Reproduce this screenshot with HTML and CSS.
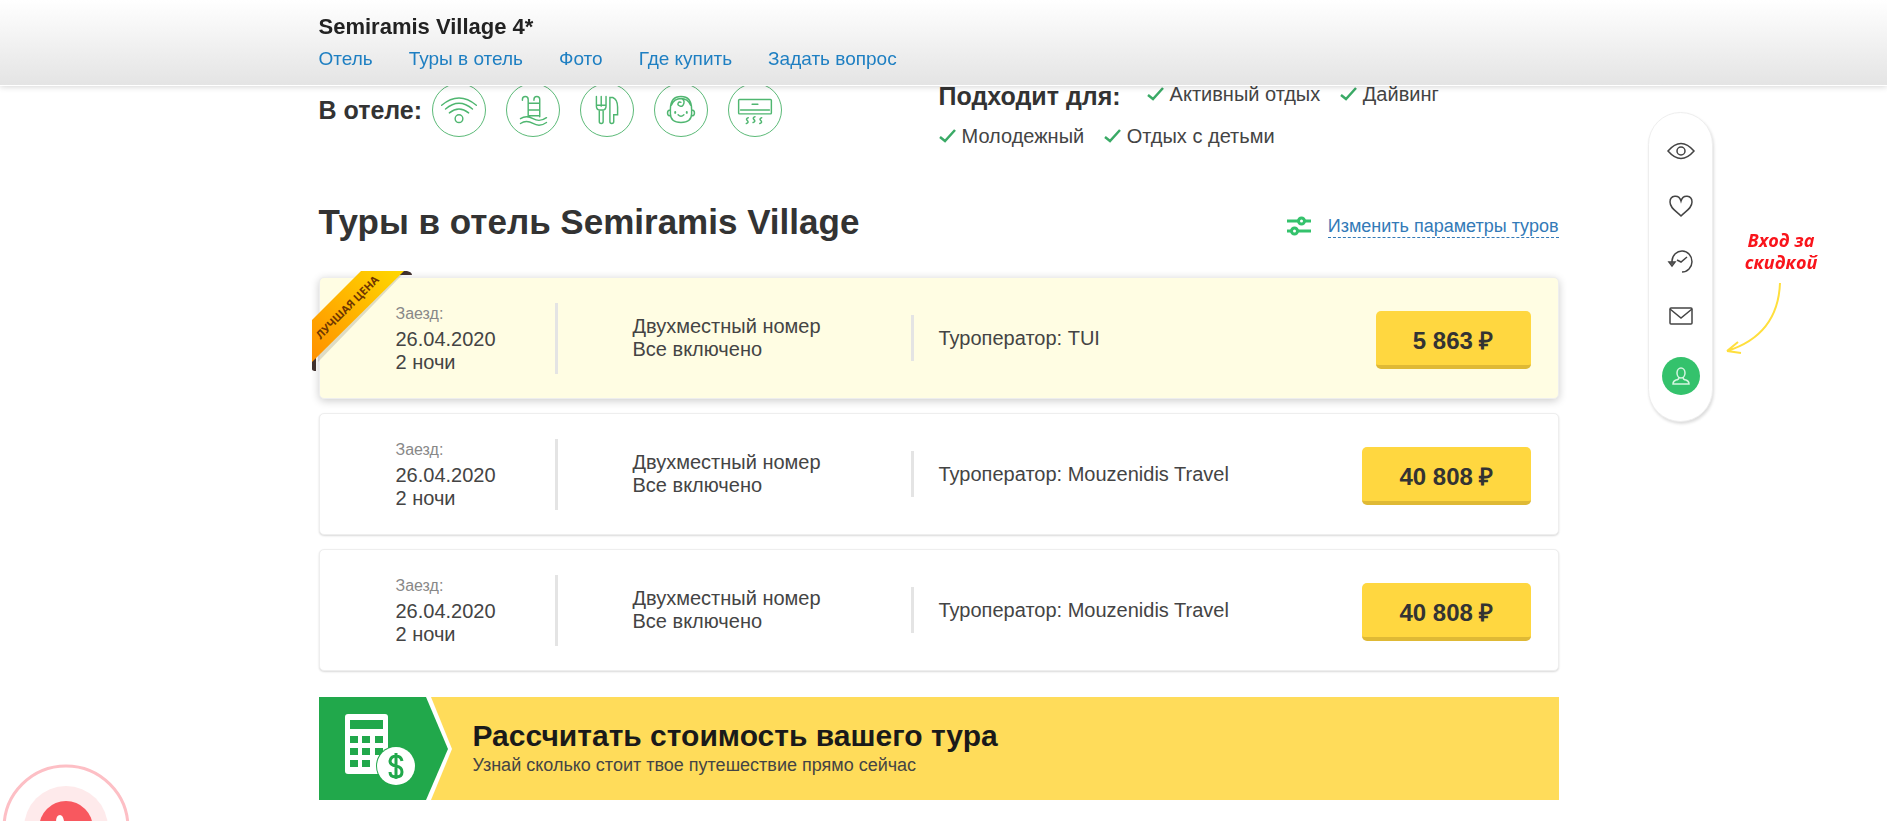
FILE: index.html
```html
<!DOCTYPE html>
<html lang="ru">
<head>
<meta charset="utf-8">
<title>Semiramis Village 4*</title>
<link rel="stylesheet" href="styles.css">
</head>
<body>
<header class="topbar">
  <div class="container">
    <div class="topbar-title">Semiramis Village 4*</div>
    <nav class="topbar-nav">
      <a href="#hotel">Отель</a>
      <a href="#tours">Туры в отель</a>
      <a href="#photo">Фото</a>
      <a href="#buy">Где купить</a>
      <a href="#ask">Задать вопрос</a>
    </nav>
  </div>
</header>

<main class="container page">
  <section class="features" id="hotel">
    <div class="in-hotel">
      <h3 class="features-title">В отеле:</h3>
      <ul class="amenities">
        <li class="amenity"><svg viewBox="0 0 54 54"><path d="M9 22Q27 7 45 22M13 26Q27 14 41 26M17 30Q27 22 37 30"/><circle cx="27" cy="36" r="4"/></svg></li>
        <li class="amenity"><svg viewBox="0 0 54 54"><path d="M16 17v-1a3 3 0 0 1 6 0v18M28 17v-1a3 3 0 0 1 6 0v18M22 20h12M22 27h12M22 33h12M14 36q6-4 13 0t14-1M14 41q6-4 13 0t14-1"/></svg></li>
        <li class="amenity"><svg viewBox="0 0 54 54"><path d="M16 13v10q0 4 4 4h2q4 0 4-4V13M21 13v10M16 22h10M19 27v12q0 2 2 2t2-2V27M30 14v25q0 2 2 2t2-2v-7h4V24q0-8-5-10z"/></svg></li>
        <li class="amenity"><svg viewBox="0 0 54 54"><path d="M16 26q0-13 11-13t11 13v5q0 9-11 9t-11-9zM16 27q-3 0-3 3t3 3M38 27q3 0 3 3t-3 3M24 32q3 3 6 0M17 22q3-7 10-7q7 0 10 7M27 15q4 1 3 5t-4 3-2-3 3-1"/><path d="M21 29v1M33 29v1" stroke-width="2"/></svg></li>
        <li class="amenity"><svg viewBox="0 0 54 54"><rect x="10" y="16" width="34" height="15" rx="1"/><path d="M12 27h30M24 21h6M20 35q-3 1-1 3t-1 3M27 34q-3 1-1 3t-1 3M34 35q-3 1-1 3t-1 3"/></svg></li>
      </ul>
    </div>
    <div class="suits">
      <h3 class="features-title suits-title">Подходит для:</h3>
      <ul class="suits-list">
        <li class="suit"><svg class="check" viewBox="0 0 17 14"><path d="M1 8l5 4L16 1"/></svg>Активный отдых</li>
        <li class="suit"><svg class="check" viewBox="0 0 17 14"><path d="M1 8l5 4L16 1"/></svg>Дайвинг</li>
        <li class="suits-break"></li>
        <li class="suit"><svg class="check" viewBox="0 0 17 14"><path d="M1 8l5 4L16 1"/></svg>Молодежный</li>
        <li class="suit"><svg class="check" viewBox="0 0 17 14"><path d="M1 8l5 4L16 1"/></svg>Отдых с детьми</li>
      </ul>
    </div>
  </section>

  <section id="tours">
    <div class="tours-head">
      <h2 class="tours-title">Туры в отель Semiramis Village</h2>
      <a class="params" href="#params">
        <svg class="params-icon" viewBox="0 0 24 20"><path d="M0 5h11M18 5h6M0 15h4M11 15h13"/><circle cx="14.500" cy="5" r="3"/><circle cx="7.500" cy="15" r="3"/></svg>
        <span class="params-text">Изменить параметры туров</span>
      </a>
    </div>

    <div class="tour tour-best">
      <svg class="ribbon" viewBox="0 0 102 102">
        <defs>
          <linearGradient id="gold" x1="0" y1="1" x2="1" y2="0"><stop offset="0" stop-color="#ff9000"/><stop offset="1" stop-color="#ffd800"/></linearGradient>
        </defs>
        <path d="M88 0h7q5 1 5 4H84zM0 86v12q0 2 4 2V84z" fill="#40312f"/>
        <path d="M52 4h38L6 91V50z" fill="#000" opacity=".13"/>
        <path d="M49 0h43L0 91V49z" fill="url(#gold)"/>
        <text class="ribbon-text" x="36" y="37" transform="rotate(-45 36 37)">ЛУЧШАЯ ЦЕНА</text>
      </svg>
      <div class="tour-date"><span class="tour-label">Заезд:</span><span>26.04.2020</span><span>2 ночи</span></div>
      <div class="tour-room"><span>Двухместный номер</span><span>Все включено</span></div>
      <div class="tour-operator">Туроператор: TUI</div>
      <button class="price" type="button">5 863 ₽</button>
    </div>
    <div class="tour">
      <div class="tour-date"><span class="tour-label">Заезд:</span><span>26.04.2020</span><span>2 ночи</span></div>
      <div class="tour-room"><span>Двухместный номер</span><span>Все включено</span></div>
      <div class="tour-operator">Туроператор: Mouzenidis Travel</div>
      <button class="price" type="button">40 808 ₽</button>
    </div>
    <div class="tour">
      <div class="tour-date"><span class="tour-label">Заезд:</span><span>26.04.2020</span><span>2 ночи</span></div>
      <div class="tour-room"><span>Двухместный номер</span><span>Все включено</span></div>
      <div class="tour-operator">Туроператор: Mouzenidis Travel</div>
      <button class="price" type="button">40 808 ₽</button>
    </div>
  </section>

  <a class="banner" href="#calc">
    <svg class="banner-art" viewBox="0 0 134 103">
      <path d="M0 0h112l21 52-21 51H0z" fill="#fff"/>
      <path d="M0 0h107l22 52-22 51H0z" fill="#21a84b"/>
      <rect x="26" y="17" width="43" height="60" rx="3" fill="#fff"/>
      <path d="M31 23h33v9H31zM31 39h8v7h-8zM43 39h8v7h-8zM56 39h8v7h-8zM31 51h8v7h-8zM43 51h8v7h-8zM56 51h8v7h-8zM31 63h8v7h-8zM43 63h8v7h-8z" fill="#21a84b"/>
      <circle cx="77" cy="69" r="20" fill="#21a84b"/>
      <circle cx="77" cy="69" r="19" fill="#fff"/>
      <path d="M83 64q-1-5-6-5t-6 5q0 4 6 5t6 6q0 5-6 5t-6-5M77 56v26" fill="none" stroke="#21a84b" stroke-width="3"/>
    </svg>
    <span class="banner-copy">
      <span class="banner-title">Рассчитать стоимость вашего тура</span>
      <span class="banner-sub">Узнай сколько стоит твое путешествие прямо сейчас</span>
    </span>
  </a>
</main>

<aside class="dock">
  <button class="dock-btn" type="button" aria-label="Просмотренные"><svg viewBox="0 0 28 28"><path d="M1 14Q14-1 27 14Q14 29 1 14z"/><circle cx="14" cy="14" r="4"/></svg></button>
  <button class="dock-btn" type="button" aria-label="Избранное"><svg viewBox="0 0 28 28"><path d="M14 24C9 19 3 16 3 10C3 3 12 2 14 9C16 2 25 3 25 10C25 16 19 19 14 24z"/></svg></button>
  <button class="dock-btn" type="button" aria-label="История"><svg viewBox="0 0 28 28"><path d="M5 17V14A10 10.500 0 1 1 15 25M2 15l3 4 3-4zM10 13l4 2 6-5"/></svg></button>
  <button class="dock-btn" type="button" aria-label="Сообщения"><svg viewBox="0 0 28 28"><rect x="3" y="6" width="22" height="16" rx="1"/><path d="M3 7l11 9 11-9"/></svg></button>
  <button class="dock-btn dock-user" type="button" aria-label="Вход"><svg viewBox="0 0 28 28"><ellipse cx="14" cy="11" rx="4" ry="5"/><path d="M12 15q0 3-3 3-3 1-3 4h16q0-3-3-4-3 0-3-3"/></svg></button>
  <div class="hint">
    <span class="hint-text">Вход за<br>скидкой</span>
    <svg class="hint-arrow" viewBox="0 0 60 76"><path d="M55 2Q53 54 2 70M2 70l11-9M2 70l14 2"/></svg>
  </div>
</aside>

<button class="callback" type="button" aria-label="Обратный звонок">
  <svg viewBox="0 0 128 128"><circle cx="64" cy="64" r="62" fill="#fff" stroke="#fdbfc5" stroke-width="3"/><circle cx="64" cy="64" r="42" fill="#feeaeb"/><circle cx="64" cy="64" r="27" fill="#f8585f"/><path d="M54 58q0-7 4-7 3 0 4 6l-2 5q3 6 7 8l5-2q7 2 7 5 0 4-7 4Q55 74 54 58z" fill="#fff"/></svg>
</button>
</body>
</html>
```
FILE: styles.css
```css
* { box-sizing: border-box; }

body {
  margin: 0;
  padding-right: 10px;
  background: #fff;
  color: #444;
  font-family: "Liberation Sans", Arial, sans-serif;
  font-size: 20px;
  line-height: 23px;
}

h2, h3, ul { margin: 0; padding: 0; }
ul { list-style: none; }
svg { display: block; fill: none; }
button { font-family: inherit; cursor: pointer; }
a { text-decoration: none; }

.container { max-width: 1240px; margin: 0 auto; }

/* sticky hotel bar */
.topbar {
  position: fixed;
  top: 0;
  left: 0;
  right: 0;
  z-index: 5;
  padding: 14px 10px 15px 0;
  background: linear-gradient(#fff, #e4e4e4);
  border-bottom: 1px solid #fff;
  box-shadow: 0 1px 6px rgba(0, 0, 0, .16);
}
.topbar-title { color: #222; font-size: 22px; font-weight: bold; line-height: 26px; }
.topbar-nav { display: flex; gap: 36px; padding-top: 8px; font-size: 19px; line-height: 22px; }
.topbar-nav a { color: #1e7fc2; }

.page { padding-top: 73px; }

/* amenities and audience */
.features { display: grid; grid-template-columns: 1fr 1fr; }
.features-title { color: #333; font-size: 25px; line-height: 38px; }
.in-hotel { display: flex; align-items: center; gap: 10px; height: 74px; }
.amenities { display: flex; gap: 20px; }
.amenity { width: 54px; border: 1px solid #5cba78; border-radius: 50%; }
.amenity svg { stroke: #4fb670; stroke-width: 1.500; stroke-linecap: round; }
.suits-title { float: left; margin-right: 26px; padding-top: 4px; }
.suits-list { line-height: 42px; }
.suit { display: inline-flex; align-items: center; gap: 6px; margin-right: 14px; }
.suits-break { height: 0; }
.check { width: 17px; height: 14px; stroke: #3aaa66; stroke-width: 2.500; }

/* tours */
.tours-head { display: flex; justify-content: space-between; align-items: center; padding: 44px 0 34px; }
.tours-title { color: #333; font-size: 35px; line-height: 42px; }
.params { display: flex; align-items: center; gap: 17px; color: #337ab7; font-size: 18px; line-height: 22px; padding-top: 8px; }
.params-icon { width: 24px; height: 20px; stroke: #34c26c; stroke-width: 3; }
.params-text { border-bottom: 1px dashed #337ab7; }

.tour {
  position: relative;
  display: grid;
  grid-template-columns: 238px 356px 1fr auto;
  align-items: center;
  min-height: 122px;
  margin-bottom: 14px;
  padding-right: 27px;
  background: #fff;
  border: 1px solid #eee;
  border-radius: 5px;
  box-shadow: 0 1px 2px rgba(0, 0, 0, .15);
}
.tour-best { background: #fffde3; box-shadow: 0 2px 9px rgba(0, 0, 0, .2); }
.tour-date, .tour-room { display: flex; flex-direction: column; justify-content: center; border-right: 3px solid #e4e4e4; }
.tour-date { min-height: 71px; padding-left: 76px; }
.tour-label { margin-bottom: 3px; color: #888; font-size: 16px; line-height: 22px; }
.tour-room { padding-left: 75px; }
.tour-operator { padding-left: 25px; }
.price {
  height: 58px;
  margin-top: 3px;
  padding: 4px 37px 0;
  color: #333;
  font-size: 24px;
  font-weight: bold;
  background: #ffd740;
  border: 0;
  border-bottom: 4px solid #dfb935;
  border-radius: 5px;
}

.ribbon { position: absolute; left: -8px; top: -7px; width: 102px; height: 102px; }
.ribbon-text { fill: #6f3700; font: bold 11px "Open Sans", sans-serif; text-anchor: middle; dominant-baseline: middle; }

/* calculator banner */
.banner { display: flex; align-items: center; gap: 20px; margin-top: 26px; background: #ffdc5a; color: #444; }
.banner-art { width: 134px; height: 103px; }
.banner-copy { display: flex; flex-direction: column; padding-bottom: 3px; }
.banner-title { color: #1a1a1a; font-size: 30px; font-weight: bold; line-height: 36px; }
.banner-sub { font-size: 18px; line-height: 22px; }

/* right dock */
.dock {
  position: fixed;
  top: 112px;
  right: 174px;
  display: flex;
  flex-direction: column;
  align-items: center;
  gap: 27px;
  width: 65px;
  padding: 24px 0 26px;
  background: #fff;
  border: 1px solid #eee;
  border-radius: 33px;
  box-shadow: 1px 2px 3px rgba(0, 0, 0, .14);
}
.dock-btn { padding: 0; background: none; border: 0; border-radius: 50%; }
.dock-btn svg { width: 28px; height: 28px; stroke: #444; stroke-width: 1.500; }
.dock-user { padding: 5px; background: #34c26c; }
.dock-user svg { stroke: #d4f5e0; }
.hint { position: absolute; left: 76px; top: 116px; width: 112px; }
.hint-text { display: block; color: #f9141b; font: italic bold 18px/22px "Open Sans", sans-serif; text-align: center; }
.hint-arrow { width: 60px; height: 76px; margin-top: 8px; stroke: #ffdf3d; stroke-width: 2; }

.callback { position: fixed; left: 2px; bottom: -71px; padding: 0; background: none; border: 0; }
.callback svg { width: 128px; height: 128px; }
```
